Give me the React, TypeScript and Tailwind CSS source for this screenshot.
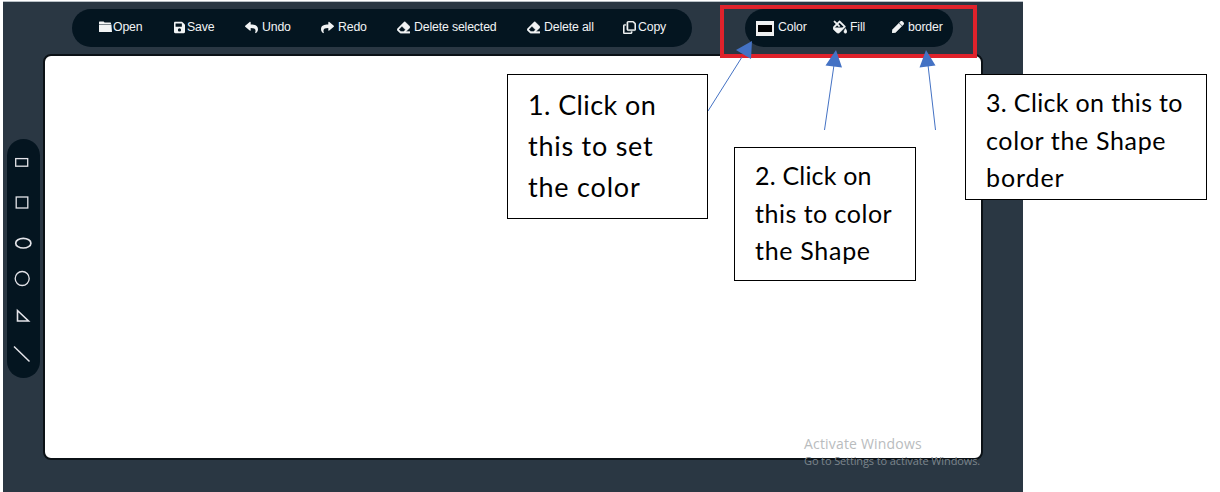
import React from "react";
import { FaEraser, FaFolder, FaSave, FaReply, FaShare, FaFillDrip, FaPen } from "react-icons/fa";
import { FaRegCopy } from "react-icons/fa6";

type Tool = { label: string; icon: React.ReactNode; width: string; gap: string };

const FolderIcon = () => (
  <svg width="13" height="12" viewBox="0 0 13 12" fill="currentColor">
    <path d="M0 1.2Q0 .6.6.6H4.6L5.6 1.6H11.4Q12 1.6 12 2.2V3H0ZM0 3.6H12.4L13 11H.6Q0 11 0 10.4Z" />
  </svg>
);

const editTools: Tool[] = [
  { label: "Open", icon: <FolderIcon />, width: "w-[75px]", gap: "gap-[1px]" },
  { label: "Save", icon: <FaSave className="h-[13px] w-[11px]" preserveAspectRatio="none" />, width: "w-[71px]", gap: "gap-[2px]" },
  { label: "Undo", icon: <FaReply size={13} />, width: "w-[76px]", gap: "gap-[4px]" },
  { label: "Redo", icon: <FaShare size={13} />, width: "w-[76px]", gap: "gap-[4px]" },
  { label: "Delete selected", icon: <FaEraser size={13} stroke="currentColor" strokeWidth="14" />, width: "w-[130px]", gap: "gap-[4px]" },
  { label: "Delete all", icon: <FaEraser size={13} stroke="currentColor" strokeWidth="14" />, width: "w-[96px]", gap: "gap-[4px]" },
  {
    label: "Copy",
    icon: <FaRegCopy className="h-[13px] w-[13px]" preserveAspectRatio="none" stroke="currentColor" strokeWidth="12" />,
    width: "w-[46px]",
    gap: "gap-[2px]",
  },
];

const paintTools: Tool[] = [
  {
    label: "Color",
    icon: <span className="mt-[2px] h-[15px] w-[18px] border-x-2 border-y-4 border-[#efefef] bg-black" />,
    width: "w-[77px]",
    gap: "gap-[4px]",
  },
  { label: "Fill", icon: <FaFillDrip size={14} stroke="currentColor" strokeWidth="18" />, width: "w-[59px]", gap: "gap-[3px]" },
  { label: "border", icon: <FaPen size={12} stroke="currentColor" strokeWidth="16" />, width: "w-[54px]", gap: "gap-[4px]" },
];

function ToolButton({ label, icon, width, gap }: Tool) {
  return (
    <button className={`flex shrink-0 items-center whitespace-nowrap ${width} ${gap}`}>
      <span className="flex shrink-0 items-center">{icon}</span>
      <span>{label}</span>
    </button>
  );
}

function ShapeTools() {
  return (
    <nav className="mt-[85px] ml-1 h-[239px] w-[33px] shrink-0 rounded-[17px] bg-[#041520]">
      <svg width="33" height="239" viewBox="7 139 33 239" fill="none" stroke="#e4e4e9" strokeWidth="1.3">
        <rect x="15.7" y="158.6" width="12" height="7.6" />
        <rect x="16.2" y="197" width="11.6" height="11" />
        <ellipse cx="23.3" cy="243.2" rx="7.6" ry="4.8" strokeWidth="1.7" />
        <circle cx="22.2" cy="278.5" r="7" />
        <path d="M17.5 310.5V321H28.5Z" strokeWidth="1.6" />
        <path d="M14 346.5 29.5 361.5" strokeWidth="1.5" />
      </svg>
    </nav>
  );
}

type Line = { words: string; tracking: string };

function Callout({ lines, box, text }: { lines: Line[]; box: string; text: string }) {
  return (
    <div className={`absolute border border-black bg-white font-['Lato',sans-serif] text-black ${box}`}>
      {lines.map(({ words, tracking }) => (
        <p key={words} className={`whitespace-nowrap ${text} ${tracking}`}>{words}</p>
      ))}
    </div>
  );
}

export default function App() {
  return (
    <div className="relative h-[492px] w-[1220px] overflow-hidden bg-white pt-px pl-[3px] font-['Liberation_Sans',sans-serif]">
      <div className="h-[491px] w-[1020px] border-t border-[#b9c0c6] bg-[#2a3743]">
        <header className="flex h-[52px] items-start pt-[7px] pl-[69px] text-[12.3px] leading-[16px] tracking-[-0.15px] text-[#f1f3f4]">
          <div className="flex h-[38px] w-[620px] items-center rounded-full bg-[#041520] pb-[2px] pl-[27px]">
            {editTools.map((tool) => <ToolButton key={tool.label} {...tool} />)}
          </div>
          <div className="ml-[53px] flex h-[38px] w-[208px] items-center rounded-full bg-[#041520] pb-[2px] pl-[11px]">
            {paintTools.map((tool) => <ToolButton key={tool.label} {...tool} />)}
          </div>
        </header>
        <div className="flex items-start">
          <ShapeTools />
          <main className="ml-[3px] h-[406px] w-[940px] rounded-[8px] border-2 border-[#0b1116] bg-white" />
        </div>
      </div>

      <div className="absolute top-[435px] left-[804px] font-['Open_Sans',sans-serif] whitespace-nowrap text-[#b9bcbe]">
        <p className="text-[14px] leading-[18px] tracking-[0.18px]">Activate Windows</p>
        <p className="text-[11px] leading-[16px] tracking-[-0.12px] text-[#7c858c]">Go to Settings to activate Windows.</p>
      </div>

      <div className="absolute top-[5px] left-[720px] h-[53px] w-[257px] border-4 border-[#e0222b]" />
      <svg className="absolute top-0 left-0" width="1220" height="492" viewBox="0 0 1220 492" fill="#4472c4" stroke="#4472c4">
        <path d="M708 111 742 57M824.5 130 834 65M935.5 130 928 65" fill="none" />
        <path d="M752 41 751 59 736 50ZM836 50 842 67.5 825.500 65.500ZM926 50 935.500 65.500 919.500 67.500Z" stroke="none" />
      </svg>

      <Callout
        lines={[
          { words: "1. Click on", tracking: "tracking-[0.4px]" },
          { words: "this to set", tracking: "tracking-[0.75px]" },
          { words: "the color", tracking: "tracking-[0.8px]" },
        ]}
        box="top-[74px] left-[507px] h-[145px] w-[201px] pt-[9px] pl-[20px]"
        text="text-[27px] leading-[41px]"
      />
      <Callout
        lines={[
          { words: "2. Click on", tracking: "tracking-[0.2px]" },
          { words: "this to color", tracking: "tracking-[0.5px]" },
          { words: "the Shape", tracking: "tracking-[0.7px]" },
        ]}
        box="top-[147px] left-[734px] h-[134px] w-[182px] pt-[9px] pl-[20px]"
        text="text-[25px] leading-[37.5px]"
      />
      <Callout
        lines={[
          { words: "3. Click on this to", tracking: "tracking-[0.35px]" },
          { words: "color the Shape", tracking: "tracking-[0.65px]" },
          { words: "border", tracking: "tracking-[0.9px]" },
        ]}
        box="top-[74px] left-[965px] h-[126px] w-[242px] pt-[9px] pl-[20px]"
        text="text-[25px] leading-[37.5px]"
      />
    </div>
  );
}
